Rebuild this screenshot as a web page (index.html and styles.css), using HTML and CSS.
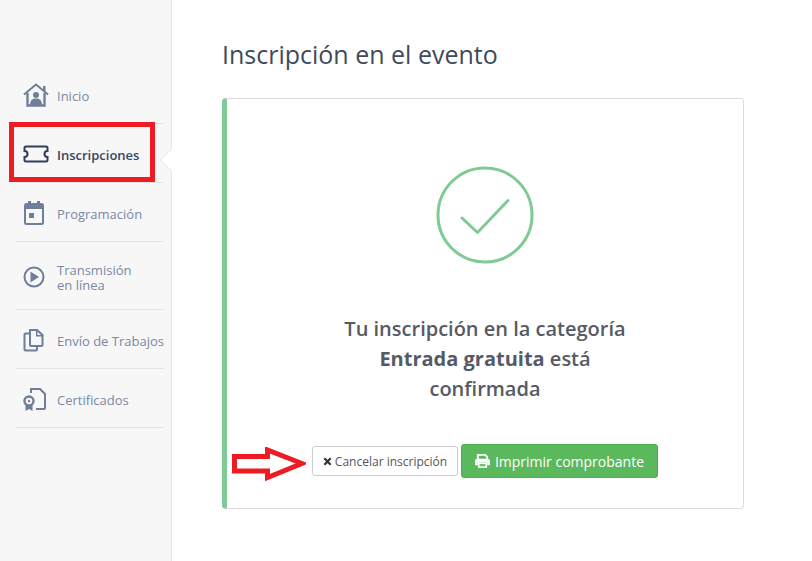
FILE: index.html
```html
<!DOCTYPE html>
<html lang="es">
<head>
  <meta charset="UTF-8">
  <title>Inscripción en el evento</title>
  <link rel="stylesheet" href="styles.css">
</head>
<body>
<div class="layout">
  <nav class="sidebar">
    <a class="nav-item">
      <svg class="nav-icon" viewBox="0 0 26 24"><path d="M1 11.500 13 1.500l12 10" fill="none" stroke="currentColor" stroke-width="2"/><path d="M4.500 10v12.500h17V10" fill="none" stroke="currentColor" stroke-width="2.400"/><path d="M20 3h2.500v5.500L20 6.500z" fill="currentColor"/><circle cx="13" cy="12" r="3" fill="currentColor"/><path d="M7 22c0-5 2.500-6.500 6-6.500s6 1.500 6 6.500z" fill="currentColor"/></svg>
      <span>Inicio</span>
    </a>
    <a class="nav-item active">
      <svg class="nav-icon" viewBox="0 0 26 24"><path d="M3 4.500h20q1.500 0 1.500 1.500v3a3 3 0 0 0 0 6v3q0 1.500-1.500 1.500H3Q1.500 19.500 1.500 18v-3a3 3 0 0 0 0-6V6Q1.500 4.500 3 4.500z" fill="none" stroke="currentColor" stroke-width="2"/></svg>
      <span>Inscripciones</span>
    </a>
    <a class="nav-item">
      <svg class="nav-icon" viewBox="0 0 26 24"><rect x="2" y="3" width="18" height="20" rx="1.500" fill="none" stroke="currentColor" stroke-width="2"/><path d="M2 3h18v5H2zM5 0h3v4H5zM14 0h3v4h-3z" fill="currentColor"/><rect x="6" y="12" width="5" height="5" fill="currentColor"/></svg>
      <span>Programación</span>
    </a>
    <a class="nav-item tall">
      <svg class="nav-icon" viewBox="0 0 26 24"><circle cx="11" cy="12" r="9.500" fill="none" stroke="currentColor" stroke-width="2"/><path d="M7.500 6.500 16 12l-8.500 5.500z" fill="currentColor"/></svg>
      <span>Transmisión<br>en línea</span>
    </a>
    <a class="nav-item">
      <svg class="nav-icon" viewBox="0 0 26 24"><path d="M7 5.500H2.500q-1 0-1 1v15q0 1 1 1H13q1 0 1-1V18" fill="none" stroke="currentColor" stroke-width="2"/><path d="M7 2h7l5.500 5v10q0 1-1 1H8q-1 0-1-1z" fill="none" stroke="currentColor" stroke-width="2"/><path d="M13 1.500h1.500V7h5v1.500H13z" fill="currentColor"/></svg>
      <span>Envío de Trabajos</span>
    </a>
    <a class="nav-item">
      <svg class="nav-icon" viewBox="0 0 26 24"><path d="M8 6V2h9l5 5v14q0 1-1 1h-8" fill="none" stroke="currentColor" stroke-width="2"/><circle cx="6" cy="14" r="4.500" fill="none" stroke="currentColor" stroke-width="2.400"/><circle cx="6" cy="14" r="1.200" fill="currentColor"/><path d="M2.500 18h7v6l-3.500-2-3.500 2z" fill="currentColor"/></svg>
      <span>Certificados</span>
    </a>
  </nav>

  <main class="content">
    <h1 class="page-title">Inscripción en el evento</h1>
    <section class="card">
      <svg class="check" viewBox="0 0 98 98"><circle cx="49" cy="49" r="47" fill="none" stroke="#80ca95" stroke-width="3"/><path d="M26 52 41.500 66.500 72 34.500" fill="none" stroke="#80ca95" stroke-width="3" stroke-linecap="round" stroke-linejoin="round"/></svg>
      <p class="message">Tu inscripción en la categoría <b>Entrada gratuita</b> está confirmada</p>
      <div class="actions">
        <button class="btn btn-cancel"><svg class="btn-x" viewBox="0 0 10 10"><path d="M1.500 1.500l7 7M8.500 1.500l-7 7" stroke="currentColor" stroke-width="2.400"/></svg>Cancelar inscripción</button>
        <button class="btn btn-print"><svg class="btn-printer" viewBox="0 0 16 15"><path d="M3 6V1h8l2 2v3" fill="none" stroke="currentColor" stroke-width="2"/><path d="M2.500 5h11Q16 5 16 7v5h-3V9H3v3H0V7q0-2 2.500-2z" fill="currentColor"/><rect x="4" y="10" width="8" height="4" fill="none" stroke="currentColor" stroke-width="1.800"/></svg>Imprimir comprobante</button>
      </div>
    </section>
  </main>
</div>

<!-- anotaciones rojas sobre la captura -->
<div class="mark-box"></div>
<svg class="mark-arrow" viewBox="0 0 74 34"><path d="M2.500 9.500h33V3L70 16.500 35.500 30.500v-6.500h-33z" fill="none" stroke="#ed1c24" stroke-width="5"/></svg>
</body>
</html>
```

FILE: styles.css
```css
* {
    box-sizing: border-box;
    font-family: "Open Sans", sans-serif;
}
html, body {
    margin: 0;
    height: 100%;
    background: #fff;
    overflow: hidden;
}
.layout {
    display: flex;
    height: 561px;
}

/* sidebar */
.sidebar {
    position: relative;
    width: 172px;
    flex: none;
    padding: 65px 7px 0 16px;
    background: #f7f7f7;
    border-right: 1px solid #e6eaef;
}
.nav-item {
    position: relative;
    display: flex;
    align-items: center;
    height: 59px;
    padding-top: 2px;
    border-bottom: 1px solid #dfe4ea;
    color: #7a88a3;
    font-size: 13px;
    line-height: 15px;
}
.nav-item.tall {
    height: 68px;
}
.nav-icon {
    width: 26px;
    height: 24px;
    margin: 0 8px 0 7px;
    flex: none;
    color: #6f7f99;
}
.nav-item span {
    padding-top: 2px;
    white-space: nowrap;
}
.nav-item.active {
    color: #36465f;
    font-weight: 600;
}
.nav-item.active .nav-icon {
    color: #2f3f58;
}
.nav-item.active:after {
    content: "";
    position: absolute;
    top: 28px;
    right: -15px;
    width: 15px;
    height: 15px;
    background: #fff;
    border-left: 1px solid #e6eaef;
    border-bottom: 1px solid #e6eaef;
    transform: rotate(45deg);
}

/* content */
.content {
    flex: 1;
    padding: 37px 68px 0 50px;
}
.page-title {
    margin: 0 0 26px;
    font-size: 25px;
    line-height: 35px;
    font-weight: 400;
    color: #3f4a5c;
}
.card {
    display: flex;
    flex-direction: column;
    align-items: center;
    height: 411px;
    padding-top: 67px;
    background: #fff;
    border: 1px solid #dcdcdc;
    border-left: 5px solid #80ca95;
    border-radius: 4px;
}
.check {
    width: 98px;
    height: 98px;
    flex: none;
}
.message {
    width: 300px;
    margin: 50px 0 0;
    text-align: center;
    font-size: 20px;
    line-height: 30px;
    font-weight: 600;
    color: #555b66;
}
.message b {
    font-weight: 700;
}
.actions {
    display: flex;
    align-items: center;
    gap: 3px;
    margin-top: 40px;
}
.btn {
    display: flex;
    align-items: center;
    justify-content: center;
    border-radius: 3px;
    padding: 0;
}
.btn-cancel {
    width: 146px;
    height: 30px;
    background: #fff;
    border: 1px solid #ccc;
    color: #555;
    font-size: 12px;
}
.btn-x {
    width: 9px;
    height: 9px;
    margin-right: 3px;
    color: #333;
}
.btn-print {
    width: 197px;
    height: 34px;
    background: #5cb85c;
    border: 1px solid #4cae4c;
    color: #fff;
    font-size: 14px;
}
.btn-printer {
    width: 15px;
    height: 14px;
    margin-right: 5px;
}

/* annotations */
.mark-box {
    position: absolute;
    left: 9px;
    top: 122px;
    width: 146px;
    height: 60px;
    border: 5px solid #ed1c24;
}
.mark-arrow {
    position: absolute;
    left: 232px;
    top: 447px;
    width: 74px;
    height: 34px;
}
```
